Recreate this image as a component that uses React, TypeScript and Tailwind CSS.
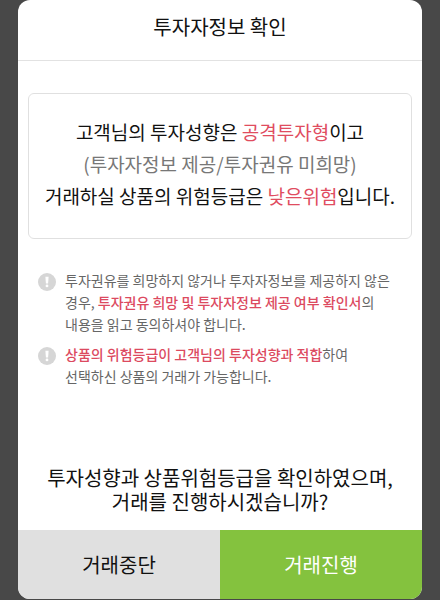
import React from 'react';

interface NoticeProps {
  children: React.ReactNode;
}

const NoticeItem: React.FC<NoticeProps> = ({ children }) => {
  return (
    <li className="flex gap-2">
      <svg className="w-5 h-5 mt-[3px] flex-shrink-0" viewBox="0 0 20 20" aria-hidden="true">
        <circle cx="10" cy="10" r="9" fill="#d6d6d6" />
        <path d="M8.4 4.8h3.2l-.5 6.6H8.9z" fill="#fff" />
        <circle cx="10" cy="13.9" r="1.4" fill="#fff" />
      </svg>
      <p className="text-[14px] leading-[22px] whitespace-nowrap">{children}</p>
    </li>
  );
};

const App: React.FC = () => {
  return (
    <div className="flex flex-col min-h-screen bg-[#484848] px-[18px] pb-px font-['Noto_Sans_CJK_KR',sans-serif]">
      <section className="flex flex-col flex-1 bg-white rounded-xl overflow-hidden text-[#111]">
        <header className="h-[61px] pb-1.5 flex items-center justify-center border-b border-[#e2e2e2]">
          <h1 className="text-xl">투자자정보 확인</h1>
        </header>

        <div className="mt-8 mx-2.5 pt-[22px] pb-[26px] flex flex-col items-center border border-[#e0e0e0] rounded-md text-[19px] leading-8 whitespace-nowrap">
          <p>고객님의 투자성향은 <strong className="font-normal text-[#e04c60]">공격투자형</strong>이고</p>
          <p className="text-[#777]">(투자자정보 제공/투자권유 미희망)</p>
          <p>거래하실 상품의 위험등급은 <strong className="font-normal text-[#e04c60]">낮은위험</strong>입니다.</p>
        </div>

        <ul className="mt-[30px] pl-[19px] flex flex-col gap-2 text-[#666]">
          <NoticeItem>
            투자권유를 희망하지 않거나 투자자정보를 제공하지 않은<br />
            경우, <strong className="font-medium text-[#dc4a5f]">투자권유 희망 및 투자자정보 제공 여부 확인서</strong>의<br />
            내용을 읽고 동의하셔야 합니다.
          </NoticeItem>
          <NoticeItem>
            <strong className="font-medium text-[#dc4a5f]">상품의 위험등급이 고객님의 투자성향과 적합</strong>하여<br />
            선택하신 상품의 거래가 가능합니다.
          </NoticeItem>
        </ul>

        <p className="mt-auto mb-4 text-xl leading-6 text-center">
          투자성향과 상품위험등급을 확인하였으며,<br />거래를 진행하시겠습니까?
        </p>
        <footer className="grid grid-cols-2 h-[69px] text-xl">
          <button type="button" className="bg-[#e0e0e0]">거래중단</button>
          <button type="button" className="bg-[#84c23e] text-white">거래진행</button>
        </footer>
      </section>
    </div>
  );
};

export default App;
